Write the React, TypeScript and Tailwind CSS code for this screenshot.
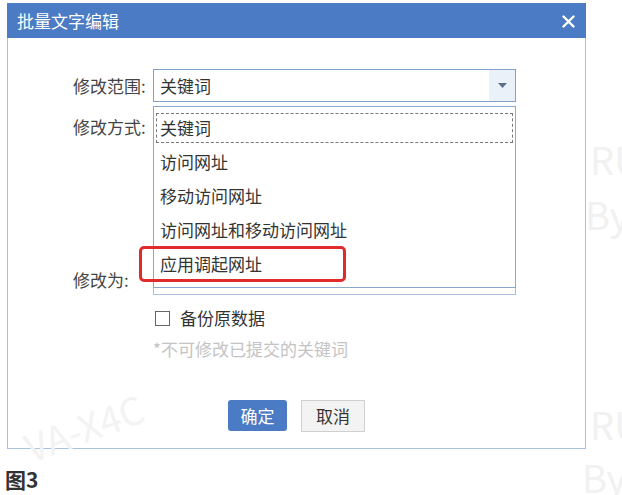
export default function App() {
  const options = ['关键词', '访问网址', '移动访问网址', '访问网址和移动访问网址', '应用调起网址'];

  return (
    <div
      className="relative w-[622px] h-[495px] overflow-hidden bg-white text-[#333]"
      style={{ fontFamily: '"Noto Sans CJK SC", "Noto Sans", sans-serif' }}
    >
      {/* Dialog */}
      <div className="ml-[7px] mt-[3px] w-[579px] h-[446px] flex flex-col">
        <div className="h-[35px] bg-[#4a7bc4] flex items-center justify-between pl-[10px] pr-[11px]">
          <span className="text-white text-[17px] leading-none">批量文字编辑</span>
          <svg width="13" height="13" viewBox="0 0 13 13" className="mt-[1px]">
            <path d="M1.5 1.5 L11.5 11.5 M11.5 1.5 L1.5 11.5" stroke="#fff" strokeWidth="2.4" strokeLinecap="round" />
          </svg>
        </div>

        <div className="flex-1 flex flex-col border-x border-b border-[#a6c2de]">
          <div className="pl-[65px] text-[17px]">
            <div className="mt-[31px] flex items-center h-[33px]">
              <span className="w-[80px] text-[#444]">修改范围:</span>
              <div className="w-[363px] h-[33px] border border-[#7fa2c6] flex">
                <span className="flex-1 flex items-center pl-[6px]">关键词</span>
                <div className="w-[26px] bg-[#eaf1f9] flex items-center justify-center">
                  <svg width="9" height="5" viewBox="0 0 9 5">
                    <path d="M0 0 H9 L4.5 5 Z" fill="#5b6f8c" />
                  </svg>
                </div>
              </div>
            </div>

            <div className="mt-[10px] flex items-center h-[30px]">
              <span className="w-[80px] text-[#444]">修改方式:</span>
            </div>

            <div className="mt-[122px] flex items-center h-[31px]">
              <span className="w-[80px] text-[#444]">修改为:</span>
              <div className="w-[363px] h-[31px] border border-[#a9c2dc]" />
            </div>

            <div className="mt-[14px] flex items-center h-[18px] pl-[82px]">
              <span className="w-[15px] h-[15px] border border-[#666]" />
              <span className="ml-[10px] text-[#333]">备份原数据</span>
            </div>

            <div className="mt-[13px] pl-[80px] h-[18px] flex items-center text-[#c4c4c4]">
              *不可修改已提交的关键词
            </div>
          </div>

          <div className="mt-auto mb-[16px] flex justify-center gap-[14px] text-[17px]">
            <button className="w-[59px] h-[31px] rounded-[3px] bg-[#4a7bc4] text-white flex items-center justify-center">
              确定
            </button>
            <button className="w-[64px] h-[32px] border border-[#d0d0d0] bg-[#f3f3f3] text-[#333] flex items-center justify-center">
              取消
            </button>
          </div>
        </div>
      </div>

      <div className="mt-[18px] ml-[5px] text-[21px] font-bold leading-[24px] text-[#333]">图3</div>

      {/* Dropdown list */}
      <div className="absolute left-[153px] top-[106px] w-[363px] h-[182px] bg-white border border-[#86a9cc] pt-[4px] text-[17px]">
        {options.map((o, i) => (
          <div
            key={o}
            className={
              i === 0
                ? 'h-[34px] flex items-center pl-[6px] outline-1 outline-dashed outline-[#777] outline-offset-[-3px]'
                : 'h-[34px] flex items-center pl-[6px]'
            }
          >
            {o}
          </div>
        ))}
      </div>

      {/* Red highlight */}
      <div className="absolute left-[139px] top-[246px] w-[207px] h-[36px] border-[3px] border-[#e02b2b] rounded-[5px]" />

      {/* Watermarks */}
      <div className="absolute left-[590px] top-[140px] text-[38px] text-[#f1f1f1] leading-none">RU</div>
      <div className="absolute left-[585px] top-[195px] text-[38px] text-[#f1f1f1] leading-none">By</div>
      <div className="absolute left-[590px] top-[405px] text-[38px] text-[#f1f1f1] leading-none">RU</div>
      <div className="absolute left-[582px] top-[458px] text-[38px] text-[#f1f1f1] leading-none">By</div>
      <div className="absolute left-[22px] top-[408px] text-[38px] text-[#f3f3f3] leading-none -rotate-[20deg]">VA-X4C</div>
    </div>
  );
}
